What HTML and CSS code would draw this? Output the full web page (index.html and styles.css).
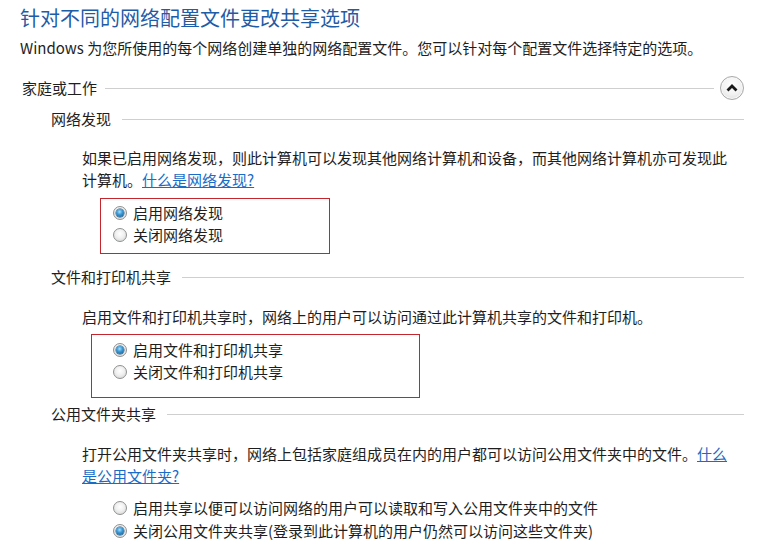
FILE: index.html
```html
<!DOCTYPE html>
<html lang="zh-CN">
<head>
<meta charset="utf-8">
<title>高级共享设置</title>
<link rel="stylesheet" href="styles.css">
</head>
<body>
<h1 class="title">针对不同的网络配置文件更改共享选项</h1>
<p class="intro">Windows 为您所使用的每个网络创建单独的网络配置文件。您可以针对每个配置文件选择特定的选项。</p>

<div class="group-head">
  <span class="group-label">家庭或工作</span>
  <span class="rule"></span>
  <button class="collapse" aria-label="折叠">
    <svg width="12" height="9" viewBox="0 0 12 9"><path d="M1.5 7.5 L6 3 L10.5 7.5" fill="none" stroke="#1a1a1a" stroke-width="2.8" stroke-linejoin="miter"/></svg>
  </button>
</div>

<div class="sub-head"><span class="sub-label">网络发现</span><span class="rule"></span></div>
<p class="desc">如果已启用网络发现，则此计算机可以发现其他网络计算机和设备，而其他网络计算机亦可发现此计算机。<a href="#">什么是网络发现?</a></p>
<div class="options box box-1">
  <label class="opt"><input type="radio" name="nd" checked><span>启用网络发现</span></label>
  <label class="opt"><input type="radio" name="nd"><span>关闭网络发现</span></label>
</div>

<div class="sub-head sh-2"><span class="sub-label">文件和打印机共享</span><span class="rule"></span></div>
<p class="desc desc-2">启用文件和打印机共享时，网络上的用户可以访问通过此计算机共享的文件和打印机。</p>
<div class="options box box-2">
  <label class="opt"><input type="radio" name="fp" checked><span>启用文件和打印机共享</span></label>
  <label class="opt"><input type="radio" name="fp"><span>关闭文件和打印机共享</span></label>
</div>

<div class="sub-head sh-3"><span class="sub-label">公用文件夹共享</span><span class="rule"></span></div>
<p class="desc desc-3">打开公用文件夹共享时，网络上包括家庭组成员在内的用户都可以访问公用文件夹中的文件。<a href="#">什么是公用文件夹?</a></p>
<div class="options plain">
  <label class="opt"><input type="radio" name="pf"><span>启用共享以便可以访问网络的用户可以读取和写入公用文件夹中的文件</span></label>
  <label class="opt"><input type="radio" name="pf" checked><span>关闭公用文件夹共享(登录到此计算机的用户仍然可以访问这些文件夹)</span></label>
</div>
</body>
</html>
```

FILE: styles.css
```css
html, body {
  margin: 0;
  padding: 0;
  background: #ffffff;
}
body {
  width: 776px;
  height: 555px;
  overflow: hidden;
  font-family: "Noto Sans CJK SC", "Microsoft YaHei", sans-serif;
  font-size: 15px;
  color: #1e1e1e;
}
.title {
  margin: 0;
  padding: 4px 0 0 20px;
  font-size: 20px;
  line-height: 28px;
  font-weight: normal;
  color: #1f5ca6;
}
.intro {
  margin: 5px 0 0 20px;
  line-height: 22px;
}
.group-head {
  display: flex;
  align-items: center;
  margin: 17px 32px 0 22px;
  height: 24px;
}
.group-label {
  line-height: 22px;
  white-space: nowrap;
}
.rule {
  flex: 1;
  height: 0;
  border-top: 1px solid #cfcfcf;
  margin-left: 8px;
}
.collapse {
  width: 24px;
  height: 24px;
  margin-left: 6px;
  padding: 0;
  border-radius: 50%;
  border: 1px solid #a9a9a9;
  background: radial-gradient(circle at 50% 35%, #ffffff 0%, #f1f1f1 55%, #d6d6d6 100%);
  box-shadow: inset 0 0 0 1px #f7f7f7;
  display: flex;
  align-items: center;
  justify-content: center;
}
.collapse svg {
  display: block;
  margin-top: -1px;
}
.sub-head {
  display: flex;
  align-items: center;
  margin: 8px 32px 0 51px;
  height: 22px;
}
.sub-head .rule {
  margin-left: 11px;
}
.sh-2 { margin-top: 12px; }
.sh-3 { margin-top: 5px; }
.sub-label {
  line-height: 22px;
  white-space: nowrap;
}
.desc {
  margin: 17px 0 0 82px;
  width: 652px;
  line-height: 22px;
}
.desc-2 { margin-top: 18px; }
.desc-3 { margin-top: 18px; }
.desc a {
  color: #1a6cc7;
  text-decoration: underline;
}
.options {
  display: flex;
  flex-direction: column;
}
.box {
  border: 1px solid #c3262d;
  box-sizing: content-box;
}
.box-1 {
  margin: 7px 0 0 100px;
  width: 216px;
  height: 51px;
  padding: 3px 0 0 12px;
}
.box-2 {
  margin: 6px 0 0 91px;
  width: 306px;
  height: 58px;
  padding: 4px 0 0 21px;
}
.plain {
  margin: 9px 0 0 113px;
}
.plain .opt { height: 23px; }
.opt {
  display: flex;
  align-items: center;
  height: 22px;
  line-height: 22px;
  white-space: nowrap;
}
.opt input {
  -webkit-appearance: none;
  appearance: none;
  margin: 0 6px 0 0;
  width: 14px;
  height: 14px;
  border-radius: 50%;
  border: 1px solid #8f9090;
  background: radial-gradient(circle at 50% 40%, #ffffff 0%, #f0f0f0 45%, #cfcfcf 100%);
  box-sizing: border-box;
  position: relative;
  flex: none;
}
.opt input:checked::after {
  content: "";
  position: absolute;
  left: 2px;
  top: 2px;
  width: 8px;
  height: 8px;
  border-radius: 50%;
  background: radial-gradient(circle at 45% 35%, #a8e0ff 0%, #3c9ad6 40%, #14507f 100%);
  box-shadow: 0 0 0 0.5px #1d4f78;
}
```
